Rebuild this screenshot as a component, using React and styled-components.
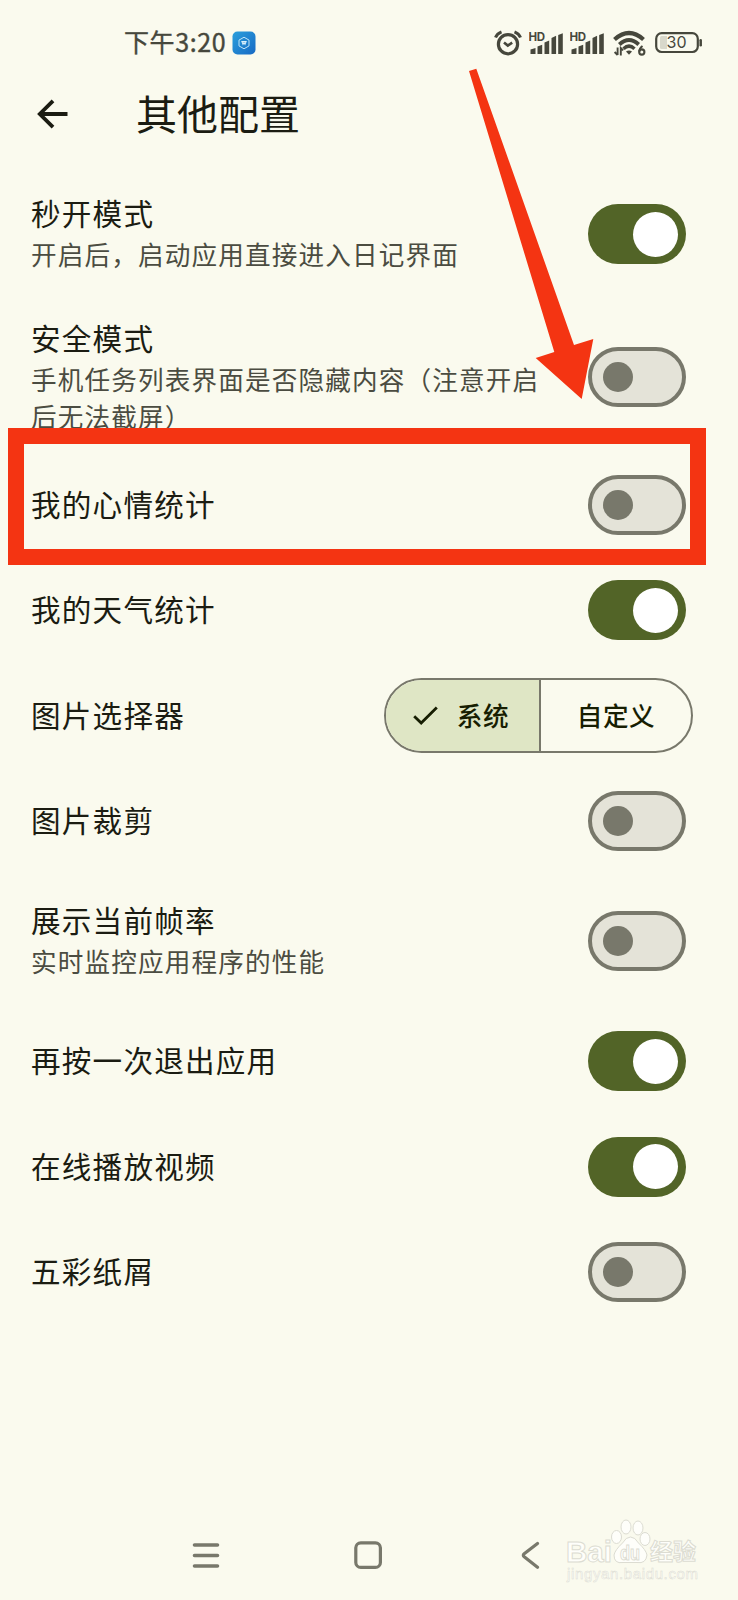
import React, { useState } from "react";
import styled, { createGlobalStyle } from "styled-components";

const Global = createGlobalStyle`
  * { box-sizing: border-box; }
  body {
    margin: 0;
    background: #fafaee;
    font-family: "Noto Sans CJK SC", "Noto Sans", sans-serif;
  }
`;

const Screen = styled.main`
  position: relative;
  display: flex;
  flex-direction: column;
  width: 738px;
  height: 1600px;
  overflow: hidden;
  background: #fafaee;
  color: #1b1c12;
`;

const StatusBar = styled.header`
  display: flex;
  align-items: center;
  height: 85px;
  padding: 0 35px 0 124px;
  color: #46473c;
`;

const Clock = styled.span`
  margin: -3px 6px 0 0;
  font-size: 25px;
  line-height: 36px;
  letter-spacing: 0.6px;
  -webkit-text-stroke: 0.4px currentColor;
`;

const StatusIcons = styled.div`
  display: flex;
  align-items: center;
  margin-left: auto;
`;

const AppBar = styled.div`
  display: flex;
  align-items: center;
  height: 58px;
  padding-left: 37px;
`;

const BackButton = styled.button`
  display: flex;
  width: 32px;
  padding: 0;
  border: 0;
  background: none;
  color: inherit;
`;

const PageTitle = styled.h1`
  margin: -5px 0 0 67px;
  font-size: 41px;
  font-weight: 400;
  line-height: 58px;
`;

const SettingsList = styled.section`
  display: flex;
  flex-direction: column;
  padding-top: 23.5px;
`;

const Row = styled.div`
  display: flex;
  align-items: center;
  justify-content: space-between;
  height: ${(p) => p.$height}px;
  padding: 0 ${(p) => (p.$wide ? 45 : 52)}px 0 31px;
`;

const RowText = styled.div`
  width: ${(p) => (p.$wide ? 320 : 516)}px;
  margin-top: -2px;
`;

const RowTitle = styled.div`
  font-size: 29.6px;
  line-height: 44px;
  letter-spacing: 1.2px;
`;

const RowHint = styled.div`
  margin-bottom: 2px;
  font-size: 25.6px;
  line-height: 37.5px;
  letter-spacing: 1.15px;
  color: #4b4c41;
`;

const Track = styled.button`
  display: flex;
  align-items: center;
  justify-content: ${(p) => (p.$on ? "flex-end" : "flex-start")};
  width: 98px;
  height: 60px;
  padding: 0 ${(p) => (p.$on ? 8 : 11)}px;
  border: ${(p) => (p.$on ? "0" : "4px solid #78786b")};
  border-radius: 30px;
  background: ${(p) => (p.$on ? "#526427" : "#e4e3d8")};
`;

const Thumb = styled.span`
  width: ${(p) => (p.$on ? 45 : 30)}px;
  height: ${(p) => (p.$on ? 45 : 30)}px;
  border-radius: 50%;
  background: ${(p) => (p.$on ? "#fff" : "#78786b")};
`;

const Segments = styled.div`
  display: grid;
  grid-template-columns: 153px 1fr;
  width: 309px;
  height: 75px;
  border: 2px solid #78786b;
  border-radius: 38px;
  overflow: hidden;
`;

const Segment = styled.button`
  display: flex;
  align-items: center;
  justify-content: center;
  gap: 19px;
  padding: 0 ${(p) => (p.$active ? 3 : 0)}px 2px 0;
  border: 0;
  background: ${(p) => (p.$active ? "#dfe6c5" : "transparent")};
  color: #171e02;
  font: 500 25.6px "Noto Sans CJK SC", sans-serif;
  letter-spacing: 0.6px;

  & + & {
    border-left: 2px solid #78786b;
  }
`;

const NavBar = styled.nav`
  display: flex;
  align-items: center;
  gap: 132px;
  height: 92px;
  margin-top: auto;
  padding-left: 191px;
`;

const NavButton = styled.button`
  display: flex;
  padding: 0;
  border: 0;
  background: none;
  color: #78786b;
`;

const Highlight = styled.div`
  position: absolute;
  left: 8px;
  top: 428px;
  width: 698px;
  height: 137px;
  border: 16px solid #f43412;
  pointer-events: none;
`;

const Pointer = styled.svg`
  position: absolute;
  left: 460px;
  top: 60px;
  pointer-events: none;
`;

const Watermark = styled.svg`
  position: absolute;
  left: 560px;
  top: 1514px;
  pointer-events: none;
`;

const AppBadge = () => (
  <svg width="24" height="24" viewBox="0 0 24 24" fill="none">
    <defs>
      <linearGradient id="badge" x1="0" y1="0" x2="1" y2="1">
        <stop offset="0" stopColor="#2ba0dc" />
        <stop offset="1" stopColor="#1769c4" />
      </linearGradient>
    </defs>
    <rect x="0.5" y="0.5" width="23" height="23" rx="5" fill="url(#badge)" />
    <path d="M12 6.2l5 2.900v5.800l-5 2.900-5-2.900V9.100z" stroke="#bfe4f7" strokeWidth="1" />
    <path d="M9.300 10.500h5.400M10 10.800l1 2.400 1-1.800 1 1.800 1-2.400" stroke="#d9f0fb" strokeWidth="1.100" />
  </svg>
);

const AlarmIcon = () => (
  <svg width="28" height="26" viewBox="0 0 28 26" fill="none" stroke="currentColor">
    <circle cx="14" cy="14.200" r="9.600" strokeWidth="3.200" />
    <path d="M10 12.400l3.800 3.200 4.400-3" strokeWidth="2.600" />
    <path d="M1.500 7.500Q3 3.500 7.500 1.800M26.500 7.500Q25 3.500 20.500 1.800" strokeWidth="3" />
  </svg>
);

const SignalIcon = () => (
  <svg width="35" height="26" viewBox="0 0 35 26" fill="currentColor">
    <text x="-0.500" y="10.600" fontSize="11.500" fontWeight="700" fontFamily="Inter, sans-serif" textLength="16.500">HD</text>
    <path d="M1.500 19.500l5-1.500v6h-5zM8.500 16.500l4.700-1.800v9.300H8.500zM15.500 12.400l4.700-2V24h-4.700zM22.500 8l4.600-2.300V24h-4.600zM29.200 5l4.600-1.800V24h-4.600z" />
  </svg>
);

const WifiIcon = () => (
  <svg width="33" height="26" viewBox="0 0 33 26" fill="none" stroke="currentColor">
    <path d="M1.500 9.500Q16 -3.500 30.500 9.500" strokeWidth="4.200" />
    <path d="M6.300 14.500Q16 5.500 25.700 14.500" strokeWidth="3.800" />
    <path d="M10.500 18.700Q16 13.500 21.500 18.700" strokeWidth="3.400" />
    <path d="M13 21.500q3-2.200 6 0l-3 3.200z" fill="currentColor" stroke="none" />
    <path d="M4.600 17.500v7.500M4.600 25l-3-3M7.800 25.500v-7.500l2.400 2.400" strokeWidth="1.900" />
    <circle cx="28.800" cy="22" r="2.600" strokeWidth="2.100" />
    <path d="M26.300 21.500Q26.500 18 29.500 16" strokeWidth="2.100" />
  </svg>
);

const BatteryIcon = () => (
  <svg width="48" height="22" viewBox="0 0 48 22" fill="none">
    <rect x="1.200" y="1.200" width="41.600" height="18.800" rx="5.500" stroke="currentColor" strokeWidth="2.200" />
    <path d="M5 5.500q0-1.500 1.500-1.500H12v13H6.500Q5 17 5 15.500z" fill="#d8d8cb" />
    <text x="21.500" y="16.300" fontSize="16" fontFamily="Inter, sans-serif" textAnchor="middle" fill="currentColor">30</text>
    <path d="M45.700 8.200v5" stroke="currentColor" strokeWidth="2.500" strokeLinecap="round" />
  </svg>
);

const Gap = styled.span`
  width: ${(p) => p.$w}px;
`;

const BackArrow = () => (
  <svg width="32" height="32" viewBox="0 0 32 32" fill="none" stroke="currentColor" strokeWidth="3.800">
    <path d="M30.500 16H3M16 2.800L2.800 16 16 29.200" />
  </svg>
);

const CheckMark = () => (
  <svg width="25" height="20" viewBox="0 0 25 20" fill="none" stroke="currentColor" strokeWidth="2.800">
    <path d="M1.200 11.200l7 6.800L23.800 2.500" />
  </svg>
);

function Switch({ initial }) {
  const [on, setOn] = useState(initial);
  return (
    <Track $on={on} role="switch" aria-checked={on} onClick={() => setOn(!on)}>
      <Thumb $on={on} />
    </Track>
  );
}

function PickerChoice() {
  const [choice, setChoice] = useState("系统");
  return (
    <Segments>
      {["系统", "自定义"].map((name) => (
        <Segment key={name} $active={choice === name} onClick={() => setChoice(name)}>
          {choice === name && <CheckMark />}
          {name}
        </Segment>
      ))}
    </Segments>
  );
}

const settings = [
  { title: "秒开模式", hint: "开启后，启动应用直接进入日记界面", on: true, height: 135 },
  { title: "安全模式", hint: "手机任务列表界面是否隐藏内容（注意开启后无法截屏）", on: false, height: 151 },
  { title: "我的心情统计", on: false },
  { title: "我的天气统计", on: true },
  { title: "图片选择器", picker: true },
  { title: "图片裁剪", on: false },
  { title: "展示当前帧率", hint: "实时监控应用程序的性能", on: false, height: 135 },
  { title: "再按一次退出应用", on: true },
  { title: "在线播放视频", on: true },
  { title: "五彩纸屑", on: false },
];

export default function App() {
  return (
    <>
      <Global />
      <Screen>
        <StatusBar>
          <Clock>下午3:20</Clock>
          <AppBadge />
          <StatusIcons>
            <AlarmIcon />
            <Gap $w={7} />
            <SignalIcon />
            <Gap $w={6} />
            <SignalIcon />
            <Gap $w={8} />
            <WifiIcon />
            <Gap $w={9} />
            <BatteryIcon />
          </StatusIcons>
        </StatusBar>
        <AppBar>
          <BackButton aria-label="返回"><BackArrow /></BackButton>
          <PageTitle>其他配置</PageTitle>
        </AppBar>
        <SettingsList>
          {settings.map((s) => (
            <Row key={s.title} $height={s.height || 105.3} $wide={s.picker}>
              <RowText $wide={s.picker}>
                <RowTitle>{s.title}</RowTitle>
                {s.hint && <RowHint>{s.hint}</RowHint>}
              </RowText>
              {s.picker ? <PickerChoice /> : <Switch initial={s.on} />}
            </Row>
          ))}
        </SettingsList>
        <NavBar>
          <NavButton aria-label="菜单">
            <svg width="30" height="30" viewBox="0 0 30 30" stroke="currentColor" strokeWidth="3.600" strokeLinecap="round">
              <path d="M3.500 6H26.500M3.500 16.500H26.500M3.500 27H26.500" />
            </svg>
          </NavButton>
          <NavButton aria-label="主页">
            <svg width="30" height="30" viewBox="0 0 30 30" fill="none" stroke="currentColor" strokeWidth="3.200">
              <rect x="2.800" y="3.800" width="24.600" height="24.600" rx="5" />
            </svg>
          </NavButton>
          <NavButton aria-label="后退">
            <svg width="30" height="30" viewBox="0 0 30 30" fill="none" stroke="currentColor" strokeWidth="3.200" strokeLinecap="round">
              <path d="M22.500 4.500L9.200 14.700Q7.400 16.300 9.200 17.800L22.500 28.200" />
            </svg>
          </NavButton>
        </NavBar>
        <Highlight />
        <Pointer width="140" height="345" viewBox="460 60 140 345">
          <path d="M469 71L476.300 68.700 574 345 593.300 339 581.700 399 535.700 358 554.300 352z" fill="#f43412" />
        </Pointer>
        <Watermark width="150" height="76" viewBox="560 1514 150 76" fill="#fefefa" stroke="#dcdcd2" strokeWidth="1">
          <text x="566" y="1561.500" fontSize="30" fontWeight="700" fontFamily="Liberation Sans, sans-serif" textLength="46" lengthAdjust="spacingAndGlyphs">Bai</text>
          <ellipse cx="616.500" cy="1537" rx="5" ry="6.500" />
          <ellipse cx="626" cy="1527" rx="5" ry="7" />
          <ellipse cx="638" cy="1528" rx="5" ry="7" />
          <ellipse cx="645" cy="1539" rx="5" ry="6.500" />
          <path d="M630.500 1537Q635 1537 638.500 1543 646 1550 647 1555 646 1564 637 1562.500H623Q614 1564 614 1555 615 1550 622.500 1543 626 1537 630.500 1537z" />
          <text x="620" y="1560" fontSize="20" fontWeight="700" fontFamily="Liberation Sans, sans-serif" textLength="20" lengthAdjust="spacingAndGlyphs">du</text>
          <text x="650" y="1560" fontSize="23" fontWeight="700" fontFamily="Noto Sans CJK SC, sans-serif">经验</text>
          <text x="567" y="1578.500" fontSize="15" fontFamily="Liberation Sans, sans-serif" strokeWidth="0.500" textLength="131">jingyan.baidu.com</text>
        </Watermark>
      </Screen>
    </>
  );
}
